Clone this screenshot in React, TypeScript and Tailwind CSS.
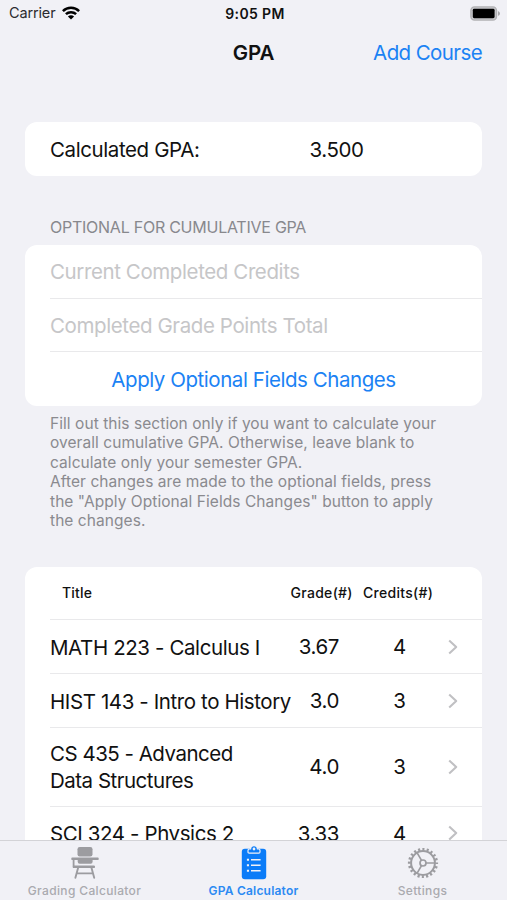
import React from 'react';
import clsx from 'clsx';

type Course = {
    title: string;
    grade: string;
    credits: number;
    tall?: boolean;
};

const courses: Course[] = [
    { title: 'MATH 223 - Calculus I', grade: '3.67', credits: 4 },
    { title: 'HIST 143 - Intro to History', grade: '3.0', credits: 3 },
    { title: 'CS 435 - Advanced Data Structures', grade: '4.0', credits: 3, tall: true },
    { title: 'SCI 324 - Physics 2', grade: '3.33', credits: 4 },
];

const WifiIcon = () => (
    <svg width="18" height="14" viewBox="0 0 18 14" fill="none" stroke="black" strokeWidth="2.5">
        <path d="M0.9 5.1C5.4 0.7 12.6 0.7 17.1 5.1" />
        <path d="M3.9 8.2C6.7 5.5 11.3 5.5 14.1 8.2" />
        <path d="M9 13.6L5.9 10.4C7.6 8.8 10.4 8.8 12.1 10.4Z" fill="black" stroke="none" />
    </svg>
);

const BatteryIcon = () => (
    <svg width="31" height="15" viewBox="0 0 31 15">
        <rect x="0.9" y="0.9" width="25.6" height="13.2" rx="3.6" fill="#c9c9cc" stroke="#b1b1b4" strokeWidth="1.4" />
        <rect x="2.8" y="2.8" width="21.8" height="9.4" rx="1.4" fill="black" />
        <path d="M28 5.2C30.6 5.8 30.6 9.2 28 9.8Z" fill="#a9a9ac" />
    </svg>
);

const Chevron = () => (
    <svg width="10" height="16" viewBox="0 0 10 16" fill="none" stroke="#c0c0c3" strokeWidth="2.1" strokeLinejoin="round">
        <path d="M1.2 1.4L8.2 8L1.2 14.6" />
    </svg>
);

const DeskIcon = () => (
    <svg width="28" height="34" viewBox="0 0 28 34" fill="#9c9ca0">
        <rect x="6.5" y="1" width="15" height="9.4" rx="2.2" />
        <rect x="0.4" y="11.6" width="27.2" height="2.4" rx="0.6" />
        <path d="M6.7 14H21.6V15.8Q21.6 17.8 19.6 17.8H8.7Q6.7 17.8 6.7 15.8Z" />
        <path d="M2.6 13.6V20.4" fill="none" stroke="#9c9ca0" strokeWidth="1.8" />
        <rect x="1.7" y="19.4" width="22.3" height="2.7" rx="1.2" />
        <path d="M7.2 21.6L4.4 31.8M20.4 21.6L23.2 31.8M6.2 27.4H21.8" fill="none" stroke="#9c9ca0" strokeWidth="1.9" strokeLinecap="round" />
    </svg>
);

const ClipboardIcon = () => (
    <svg width="26" height="36" viewBox="0 0 26 36">
        <rect x="0.8" y="3.7" width="24.4" height="30.6" rx="3" fill="#0b7cf8" />
        {/* clip */}
        <path d="M7 7V5.4Q7 4 8.4 4H9.6Q9.8 0.7 13 0.7Q16.2 0.7 16.4 4H17.6Q19 4 19 5.4V7Q19 8.2 17.8 8.2H8.2Q7 8.2 7 7Z" fill="#0b7cf8" stroke="#f1f1f6" strokeWidth="1.2" />
        <circle cx="13" cy="4" r="1.4" fill="#f1f1f6" />
        <path d="M10 14.7H19.6M10 20.2H19.6M10 25.7H19.6" stroke="#f1f1f6" strokeWidth="1.6" />
        <path d="M5.9 14.7H8M5.9 20.2H8M5.9 25.7H8" stroke="#f1f1f6" strokeWidth="2" />
    </svg>
);

const GearIcon = () => (
    <svg width="32" height="32" viewBox="0 0 32 32" fill="none" stroke="#9c9ca0">
        {/* teeth */}
        <circle cx="16" cy="16" r="13.7" strokeWidth="2.8" strokeDasharray="2.1 2.204" strokeDashoffset="1.05" />
        <circle cx="16" cy="16" r="11.9" strokeWidth="2" />
        <circle cx="16" cy="16" r="3" strokeWidth="1.7" />
        <path d="M19 16H28M14.5 13.4L10 5.6M14.5 18.6L10 26.4" strokeWidth="1.7" />
    </svg>
);

const StatusBar = () => (
    <div className="grid h-[28px] grid-cols-[1fr_auto_1fr] items-center pr-[6px] pl-[9px]">
        <div className="flex items-center gap-[7px] pb-[2px]">
            <span className="text-[14.5px] tracking-[-0.15px] text-[#2b2b2e]">Carrier</span>
            <WifiIcon />
        </div>
        <span className="pb-px text-[14px] font-semibold tracking-[0.35px] whitespace-nowrap">9:05 PM</span>
        <div className="flex justify-end pb-[2px]">
            <BatteryIcon />
        </div>
    </div>
);

const NavBar = () => (
    <div className="grid h-[50px] grid-cols-[1fr_auto_1fr] items-center px-[25px]">
        <span className="col-start-2 text-[20.5px] font-semibold tracking-[-0.1px]">GPA</span>
        <button className="justify-self-end text-[20.5px] tracking-[-0.6px] text-[#1b82f4]">Add Course</button>
    </div>
);

const CourseRow = ({ course }: { course: Course }) => (
    <div
        className={clsx('ml-[25px] flex items-center border-t border-[#e9e9eb]', {
            'h-[79px]': course.tall,
            'h-[53.8px]': !course.tall,
        })}
    >
        <span
            className={clsx('shrink-0 leading-[27px]', {
                'w-[200px] tracking-[-0.5px]': course.tall,
                'w-[244px] pt-[2px] whitespace-nowrap': !course.tall,
            })}
        >
            {course.title}
        </span>
        <span className="ml-auto pt-[2px] text-right">{course.grade}</span>
        <span className="ml-[44px] w-[33px] pt-[2px] text-center">{course.credits}</span>
        <span className="mr-[24px] ml-[32px] pt-px">
            <Chevron />
        </span>
    </div>
);

const tabs = [
    { label: 'Grading Calculator', icon: <DeskIcon />, active: false },
    { label: 'GPA Calculator', icon: <ClipboardIcon />, active: true },
    { label: 'Settings', icon: <GearIcon />, active: false },
];

const TabBar = () => (
    <div className="grid h-[60px] shrink-0 grid-cols-3 border-t border-[#d3d3d7] bg-[#f1f1f6]">
        {tabs.map((tab) => (
            <button
                key={tab.label}
                className={clsx('flex flex-col items-center text-[12px] whitespace-nowrap', {
                    'font-semibold tracking-[0.2px] text-[#2b8af3]': tab.active,
                    'font-medium tracking-[0.35px] text-[#aaaaaf]': !tab.active,
                })}
            >
                <span className="flex h-[42px] items-center pt-[2px]">{tab.icon}</span>
                <span className="leading-[16px]">{tab.label}</span>
            </button>
        ))}
    </div>
);

const App = () => {
    return (
        <div className="flex h-[900px] w-[507px] flex-col overflow-hidden bg-[#f1f1f6] font-['Inter',sans-serif] text-[20.5px] tracking-[-0.4px] text-[#111]">
            <StatusBar />
            <NavBar />

            <main className="min-h-0 flex-1 overflow-hidden px-[25px] pt-[44px]">
                <section className="flex h-[54px] items-center rounded-[12px] bg-white pt-[2px] pl-[25px]">
                    <span className="w-[259.5px]">Calculated GPA:</span>
                    <span>3.500</span>
                </section>

                <h2 className="mt-[41px] mb-[8px] pl-[25px] text-[16px] leading-[20px] tracking-[-0.25px] text-[#88888d]">
                    OPTIONAL FOR CUMULATIVE GPA
                </h2>
                <section className="h-[160.5px] rounded-[12px] bg-white pl-[25px]">
                    <input
                        className="block h-[53.5px] w-full border-b border-[#e9e9eb] pt-px outline-none placeholder:text-[#c6c6c8]"
                        placeholder="Current Completed Credits"
                    />
                    <input
                        className="block h-[53.5px] w-full border-b border-[#e9e9eb] pt-[2px] outline-none placeholder:text-[#c6c6c8]"
                        placeholder="Completed Grade Points Total"
                    />
                    <button className="h-[53.5px] w-full pt-[3px] pr-[25px] text-center tracking-[-0.45px] text-[#1b82f4]">
                        Apply Optional Fields Changes
                    </button>
                </section>
                <p className="mt-[8px] pl-[25px] text-[15.5px] leading-[19.5px] tracking-[0.06px] whitespace-nowrap text-[#8a8a8f]">
                    Fill out this section only if you want to calculate your<br />
                    overall cumulative GPA. Otherwise, leave blank to<br />
                    calculate only your semester GPA.<br />
                    After changes are made to the optional fields, press<br />
                    the "Apply Optional Fields Changes" button to apply<br />
                    the changes.
                </p>

                <section className="mt-[36px] rounded-t-[12px] bg-white">
                    <div className="flex h-[52.5px] items-center pl-[37px] text-[14px] font-medium tracking-[0.2px]">
                        <span className="w-[228.5px]">Title</span>
                        <span className="w-[72.5px] tracking-[0.3px]">Grade(#)</span>
                        <span className="tracking-[0.3px]">Credits(#)</span>
                    </div>
                    {courses.map((course) => (
                        <CourseRow key={course.title} course={course} />
                    ))}
                </section>
            </main>

            <TabBar />
        </div>
    );
};

export default App;
